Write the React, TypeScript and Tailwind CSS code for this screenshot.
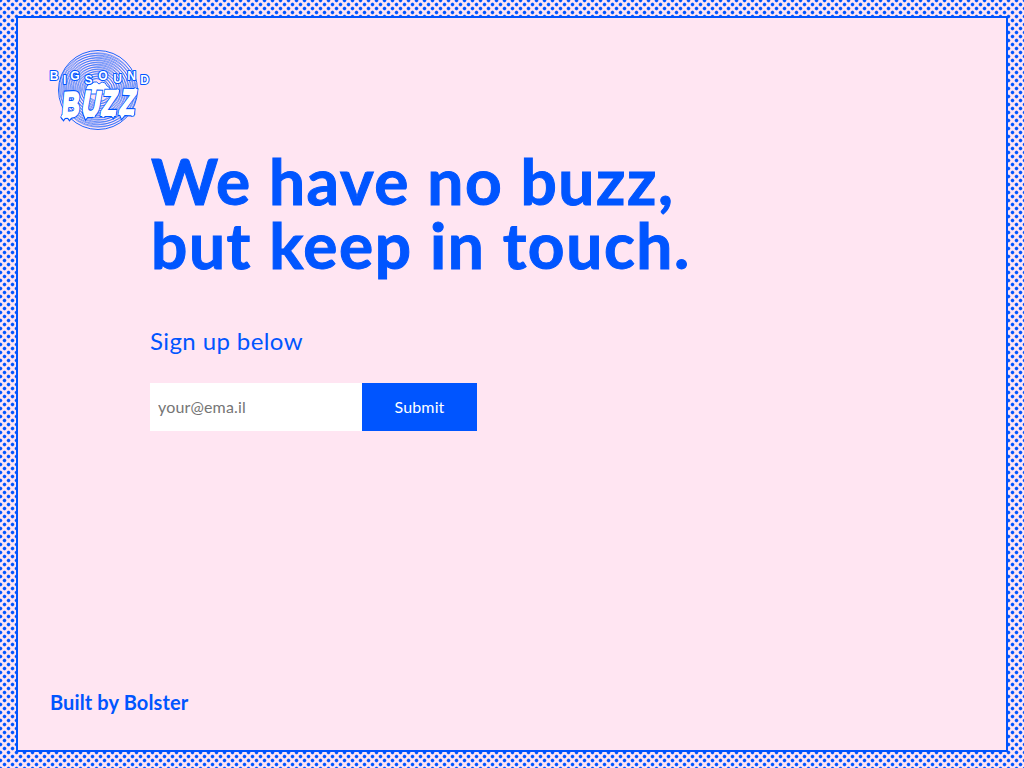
const rings = [39.5, 37.2, 34.9, 32.6, 30.3, 28, 25.7, 23.4, 21.1, 18.8, 16.5, 14.2, 11.9];

const arc = [
  { c: "B", x: 4, y: 29.7 },
  { c: "I", x: 14.6, y: 33.6 },
  { c: "G", x: 24.8, y: 29.7 },
  { c: "S", x: 38.6, y: 33.6 },
  { c: "O", x: 52.8, y: 29.7 },
  { c: "U", x: 67.6, y: 32.8 },
  { c: "N", x: 81.6, y: 29.7 },
  { c: "D", x: 94.6, y: 33.6 },
];

const buzz = [
  { c: "B", x: 20, y: 66.5, r: -3 },
  { c: "U", x: 39.5, y: 65.5, r: 2 },
  { c: "Z", x: 58, y: 64.5, r: 0 },
  { c: "Z", x: 76, y: 64, r: 2 },
];

const drips =
  "M12 66l1.5 2 1.5-2zM18 66l1.5 2 1.5-2zM35 64.5l1 2.5 2-2.5zM42 64.5l2 2 0-2zM53 64l0 2.5 2-2.5zM61 64l2 2 1-2zM71 64l1 2.5 2-2.5zM80 63l3 2 0-3zM83 41l3-2-1 4zM66 42l2-2-1 4z";

function Word() {
  return (
    <>
      {buzz.map((l, i) => (
        <text key={i} transform={`translate(${l.x} ${l.y}) rotate(${l.r}) skewX(-8) scale(.7 1)`}>
          {l.c}
        </text>
      ))}
      <path d={drips} />
    </>
  );
}

function Logo() {
  return (
    <svg className="block h-20 w-[100px] overflow-visible" viewBox="0 0 100 80" role="img" aria-label="Bigsound Buzz">
      <circle cx="48" cy="40" r="39.5" fill="none" stroke="#0055ff" strokeWidth="0.9" />
      <g fill="none" stroke="#0055ff" strokeWidth="0.5">
        {rings.slice(1).map((r) => (
          <circle key={r} cx="48" cy="40" r={r} />
        ))}
        {rings.slice(1).map((r) => (
          <ellipse key={r} cx="48" cy="40" rx={r + 1.5} ry={r - 1} transform="rotate(20 48 40)" />
        ))}
      </g>
      <path
        d="M36 44 L36 38 Q37 34 41 34 L44 32 Q47 31 49 34 L52 32 Q56 32 57 36 Q61 37 60 44 Z"
        fill="#fff"
        stroke="#0055ff"
        strokeWidth="0.9"
      />
      <g
        fontFamily="'Liberation Sans', Arial, sans-serif"
        fontWeight="700"
        fontSize="12"
        textAnchor="middle"
        fill="#fff"
        stroke="#0055ff"
        strokeWidth="2"
        strokeLinejoin="round"
        style={{ paintOrder: "stroke" }}
      >
        {arc.map((l) => (
          <text key={l.c} x={l.x} y={l.y}>
            {l.c}
          </text>
        ))}
      </g>
      <g
        fontFamily="'Liberation Sans', Arial, sans-serif"
        fontWeight="700"
        fontSize="35"
        textAnchor="middle"
        strokeLinejoin="miter"
        strokeMiterlimit="2"
      >
        <g fill="#0055ff" stroke="#0055ff" strokeWidth="4.4">
          <Word />
        </g>
        <g fill="#fff" stroke="#fff" strokeWidth="2.2">
          <Word />
        </g>
      </g>
    </svg>
  );
}

export default function App() {
  return (
    <div className="h-screen bg-[#ffe5f2] bg-[radial-gradient(circle_at_4.5px_4.5px,#0055ff_1.2px,transparent_2.3px),radial-gradient(circle_at_4.5px_4.5px,#0055ff_1.2px,transparent_2.3px)] bg-[length:8px_8px] bg-[position:0px_0px,4px_4px] p-4 font-[Lato,sans-serif] text-[#0055ff]">
      <main className="flex h-full flex-col border-2 border-[#0055ff] bg-[#ffe5f2] p-8">
        <Logo />
        <div className="ml-[100px] mt-[18px]">
          <h1 className="whitespace-nowrap pl-px pt-px text-[64px] font-bold leading-[64px] tracking-[1.6px] [-webkit-text-stroke:1px_#0055ff]">
            We have no buzz,
            <br />
            but keep in touch.
          </h1>
          <p className="mt-[46px] text-2xl leading-9 tracking-[0.4px]">Sign up below</p>
          <form className="mt-6 flex h-12" onSubmit={(e) => e.preventDefault()}>
            <input
              type="email"
              placeholder="your@ema.il"
              className="w-[212px] bg-white px-2 text-base tracking-[0.15px] outline-none placeholder:text-[#757575]"
            />
            <button className="w-[115px] bg-[#0055ff] text-base tracking-[0.15px] text-white">Submit</button>
          </form>
        </div>
        <a href="#" className="mb-px mt-auto self-start text-xl font-bold leading-[30px] tracking-[0.12px]">
          Built by Bolster
        </a>
      </main>
    </div>
  );
}
